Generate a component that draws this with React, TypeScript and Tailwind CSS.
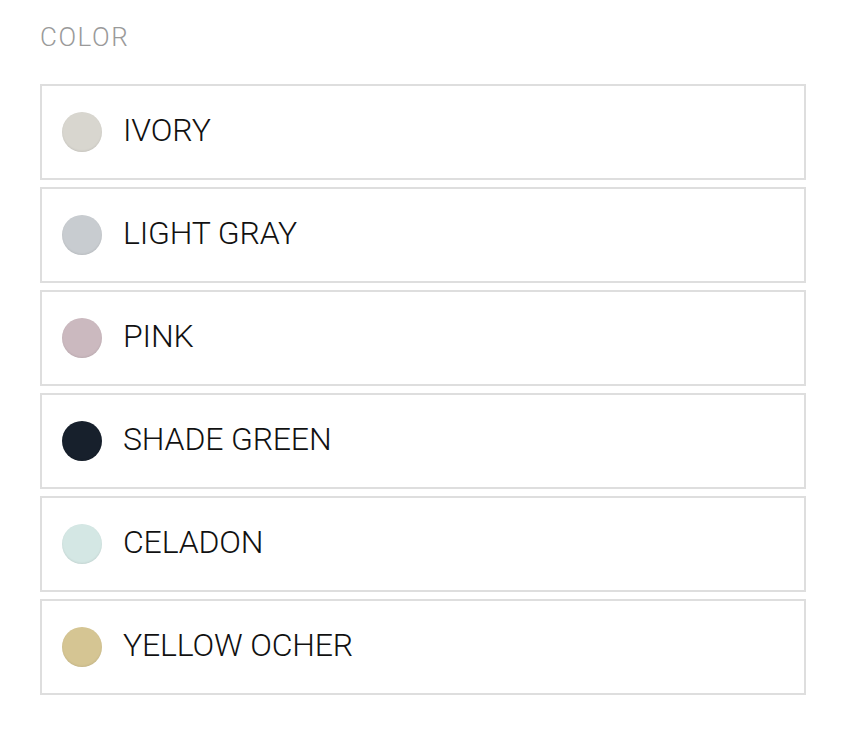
const colors = [
  { name: "IVORY", swatch: "#d8d6cf" },
  { name: "LIGHT GRAY", swatch: "#c8ccd0" },
  { name: "PINK", swatch: "#cbb9bf" },
  { name: "SHADE GREEN", swatch: "#17202c" },
  { name: "CELADON", swatch: "#d4e7e4" },
  { name: "YELLOW OCHER", swatch: "#d5c593" },
];

const App = () => {
  return (
    <div className="min-h-screen bg-white px-10 pt-[22px]" style={{ fontFamily: "Roboto, 'Liberation Sans', sans-serif" }}>
      <h2 className="text-[26px] font-light leading-[30px] tracking-[0.06em] text-[#9a9a9a]">COLOR</h2>
      <div className="mt-8 flex w-[766px] flex-col gap-[7px]">
        {colors.map((c) => (
          <div key={c.name} className="flex h-[96px] items-center border-2 border-[#dedede] pl-5">
            <span
              className="size-10 shrink-0 rounded-full shadow-[inset_0_-1px_2px_rgba(0,0,0,0.08)]"
              style={{ backgroundColor: c.swatch }}
            />
            <span className="mb-1 ml-[21px] text-[32px] font-light leading-none tracking-[-0.005em] text-[#111]">{c.name}</span>
          </div>
        ))}
      </div>
    </div>
  );
};

export default App;
